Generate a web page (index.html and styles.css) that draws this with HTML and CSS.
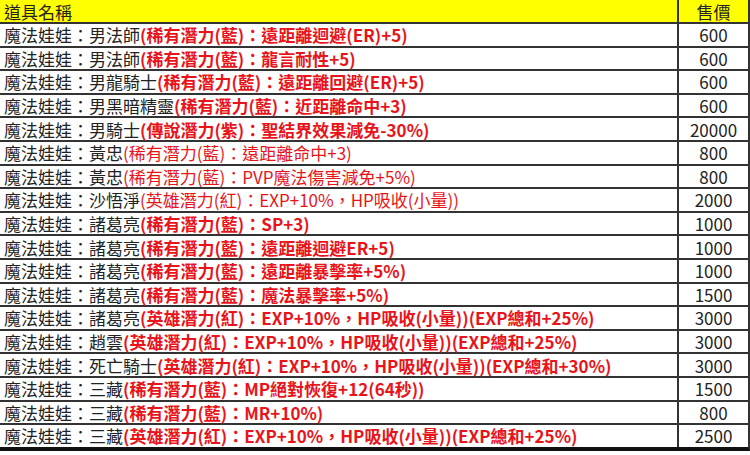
FILE: index.html
```html
<!DOCTYPE html>
<html lang="zh-Hant">
<head>
<meta charset="utf-8">
<link rel="stylesheet" href="styles.css">
</head>
<body>
<div class="sheet">
  <div class="row head"><div class="name">道具名稱</div><div class="price">售價</div></div>
  <div class="row"><div class="name">魔法娃娃：男法師<span class="b">(稀有潛力(藍)：遠距離迴避(ER)+5)</span></div><div class="price">600</div></div>
  <div class="row"><div class="name">魔法娃娃：男法師<span class="b">(稀有潛力(藍)：龍言耐性+5)</span></div><div class="price">600</div></div>
  <div class="row"><div class="name">魔法娃娃：男龍騎士<span class="b">(稀有潛力(藍)：遠距離回避(ER)+5)</span></div><div class="price">600</div></div>
  <div class="row"><div class="name">魔法娃娃：男黑暗精靈<span class="b">(稀有潛力(藍)：近距離命中+3)</span></div><div class="price">600</div></div>
  <div class="row"><div class="name">魔法娃娃：男騎士<span class="b">(傳說潛力(紫)：聖結界效果減免-30%)</span></div><div class="price">20000</div></div>
  <div class="row"><div class="name">魔法娃娃：黃忠<span class="r">(稀有潛力(藍)：遠距離命中+3)</span></div><div class="price">800</div></div>
  <div class="row"><div class="name">魔法娃娃：黃忠<span class="r">(稀有潛力(藍)：PVP魔法傷害減免+5%)</span></div><div class="price">800</div></div>
  <div class="row"><div class="name">魔法娃娃：沙悟淨<span class="r">(英雄潛力(紅)：EXP+10%，HP吸收(小量))</span></div><div class="price">2000</div></div>
  <div class="row"><div class="name">魔法娃娃：諸葛亮<span class="b">(稀有潛力(藍)：SP+3)</span></div><div class="price">1000</div></div>
  <div class="row"><div class="name">魔法娃娃：諸葛亮<span class="b">(稀有潛力(藍)：遠距離迴避ER+5)</span></div><div class="price">1000</div></div>
  <div class="row"><div class="name">魔法娃娃：諸葛亮<span class="b">(稀有潛力(藍)：遠距離暴擊率+5%)</span></div><div class="price">1000</div></div>
  <div class="row"><div class="name">魔法娃娃：諸葛亮<span class="b">(稀有潛力(藍)：魔法暴擊率+5%)</span></div><div class="price">1500</div></div>
  <div class="row"><div class="name">魔法娃娃：諸葛亮<span class="b">(英雄潛力(紅)：EXP+10%，HP吸收(小量))(EXP總和+25%)</span></div><div class="price">3000</div></div>
  <div class="row"><div class="name">魔法娃娃：趙雲<span class="b">(英雄潛力(紅)：EXP+10%，HP吸收(小量))(EXP總和+25%)</span></div><div class="price">3000</div></div>
  <div class="row"><div class="name">魔法娃娃：死亡騎士<span class="b">(英雄潛力(紅)：EXP+10%，HP吸收(小量))(EXP總和+30%)</span></div><div class="price">3000</div></div>
  <div class="row"><div class="name">魔法娃娃：三藏<span class="b">(稀有潛力(藍)：MP絕對恢復+12(64秒))</span></div><div class="price">1500</div></div>
  <div class="row"><div class="name">魔法娃娃：三藏<span class="b">(稀有潛力(藍)：MR+10%)</span></div><div class="price">800</div></div>
  <div class="row last"><div class="name">魔法娃娃：三藏<span class="b">(英雄潛力(紅)：EXP+10%，HP吸收(小量))(EXP總和+25%)</span></div><div class="price">2500</div></div>
</div>
</body>
</html>
```

FILE: styles.css
```css
html, body {
  margin: 0;
  padding: 0;
  background: #ffffff;
}
body {
  font-family: "Noto Sans CJK TC", "Noto Sans", sans-serif;
  font-size: 17px;
  color: #222222;
}
.sheet {
  width: 750px;
  display: flex;
  flex-direction: column;
}
.row {
  display: grid;
  grid-template-columns: 677px 71px;
  height: 23.6px;
  box-sizing: border-box;
  border-bottom: 2px solid #333333;
  border-right: 2px solid #333333;
}
.row.head {
  height: 24px;
  background: #ffff00;
}
.row.last {
  border-bottom: 4px solid #111111;
  height: 25.6px;
}
.name {
  padding-left: 4px;
  white-space: nowrap;
  display: flex;
  align-items: center;
  line-height: 1;
}
.price {
  border-left: 2px solid #333333;
  display: flex;
  align-items: center;
  justify-content: center;
  line-height: 1;
}
.b {
  color: #e8141a;
  font-weight: bold;
}
.r {
  color: #e8141a;
}
```
